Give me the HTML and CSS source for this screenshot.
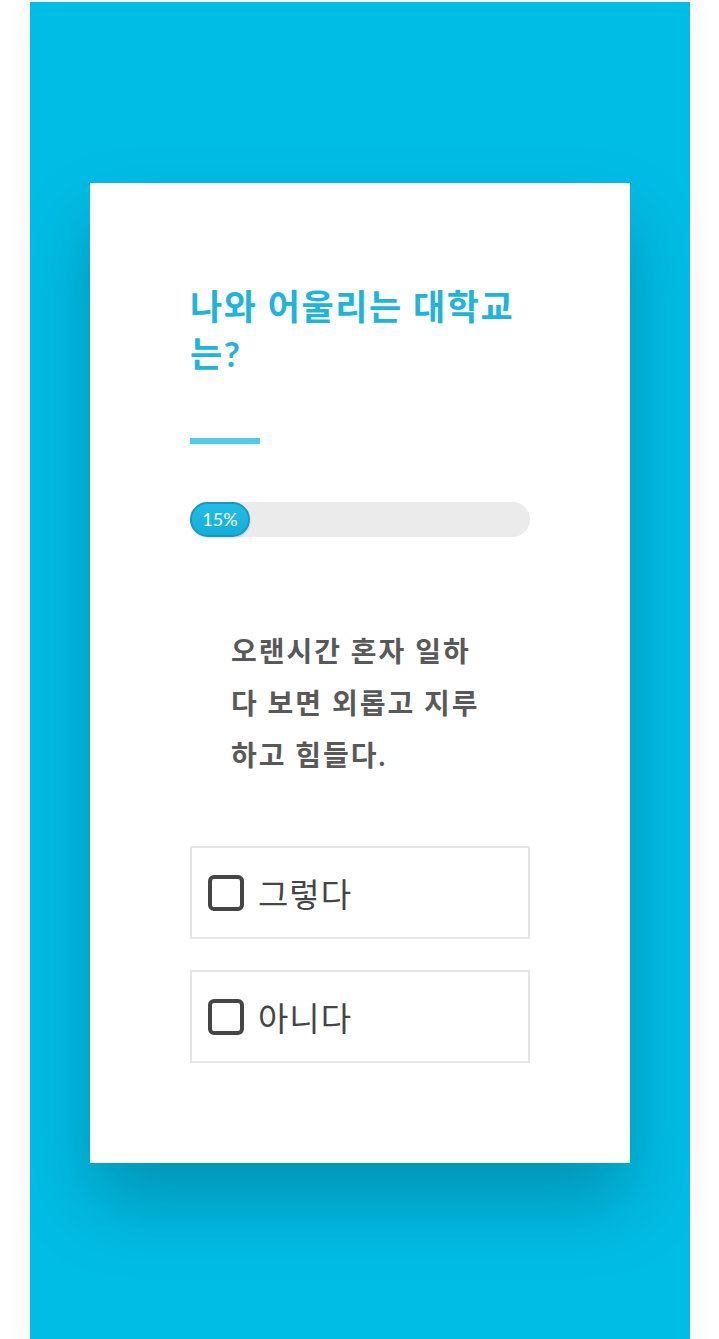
FILE: index.html
```html
<!DOCTYPE html>
<html lang="ko">
  <head>
    <meta charset="utf-8">
    <title>나와 어울리는 대학교는?</title>
    <link rel="stylesheet" href="styles.css">
  </head>
  <body>

    <div class="stage">
      <div class="card">

        <h1 class="title">나와 어울리는 대학교는?</h1>
        <div class="divider"></div>

        <div class="progress">
          <div class="progress-fill" style="width: 15%">15%</div>
        </div>

        <p class="question">오랜시간 혼자 일하다 보면 외롭고 지루하고 힘들다.</p>

        <div class="options">
          <label class="option">
            <svg class="check" viewBox="0 0 36 36" width="36" height="36">
              <rect x="2" y="2" width="32" height="32" rx="4" ry="4" fill="none" stroke="#454545" stroke-width="4"/>
            </svg>
            <span>그렇다</span>
          </label>
          <label class="option">
            <svg class="check" viewBox="0 0 36 36" width="36" height="36">
              <rect x="2" y="2" width="32" height="32" rx="4" ry="4" fill="none" stroke="#454545" stroke-width="4"/>
            </svg>
            <span>아니다</span>
          </label>
        </div>

      </div>
    </div>

  </body>
</html>
```

FILE: styles.css
```css
html {
  height: 100%;
}
body {
  margin: 0;
  padding: 0;
  background: #ffffff;
  font-family: Lato, "Noto Sans CJK KR", sans-serif;
  color: #454545;
}

.stage {
  margin: 2px 29px 0 30px;
  padding: 181px 60px 200px;
  background: #00bde6;
  box-shadow: 0 0 30px rgba(0, 0, 0, 0.04);
}

.card {
  background: #ffffff;
  padding: 100px;
  box-shadow: 0 40px 70px rgba(0, 0, 0, 0.22);
}

.title {
  margin: 0;
  font-size: 35px;
  line-height: 47px;
  letter-spacing: 1.6px;
  font-weight: bold;
  color: #1fb4da;
}

.divider {
  width: 70px;
  height: 6px;
  margin: 61px 0 58px;
  background: #4ecbe8;
}

.progress {
  height: 35px;
  border-radius: 18px;
  background: #ebebeb;
}

.progress-fill {
  min-width: 60px;
  height: 35px;
  box-sizing: border-box;
  border: 2px solid #1699c2;
  border-radius: 18px;
  background: linear-gradient(#22bde6, #14aed9);
  color: #ffffff;
  font-size: 18px;
  line-height: 31px;
  text-align: center;
  box-shadow: 0 1px 2px rgba(0, 0, 0, 0.15);
}

.question {
  margin: 88px 0 0;
  padding: 0 40px 0 41px;
  font-size: 28px;
  line-height: 52px;
  letter-spacing: 2px;
  font-weight: bold;
  color: #595959;
}

.options {
  display: flex;
  flex-direction: column;
  gap: 31px;
  margin-top: 65px;
}

.option {
  display: flex;
  align-items: center;
  gap: 14px;
  height: 93px;
  box-sizing: border-box;
  padding: 0 16px;
  border: 2px solid #e6e6e6;
  font-size: 33px;
  letter-spacing: 1px;
  color: #454545;
  cursor: pointer;
}

.check {
  display: block;
  flex: none;
}
```
